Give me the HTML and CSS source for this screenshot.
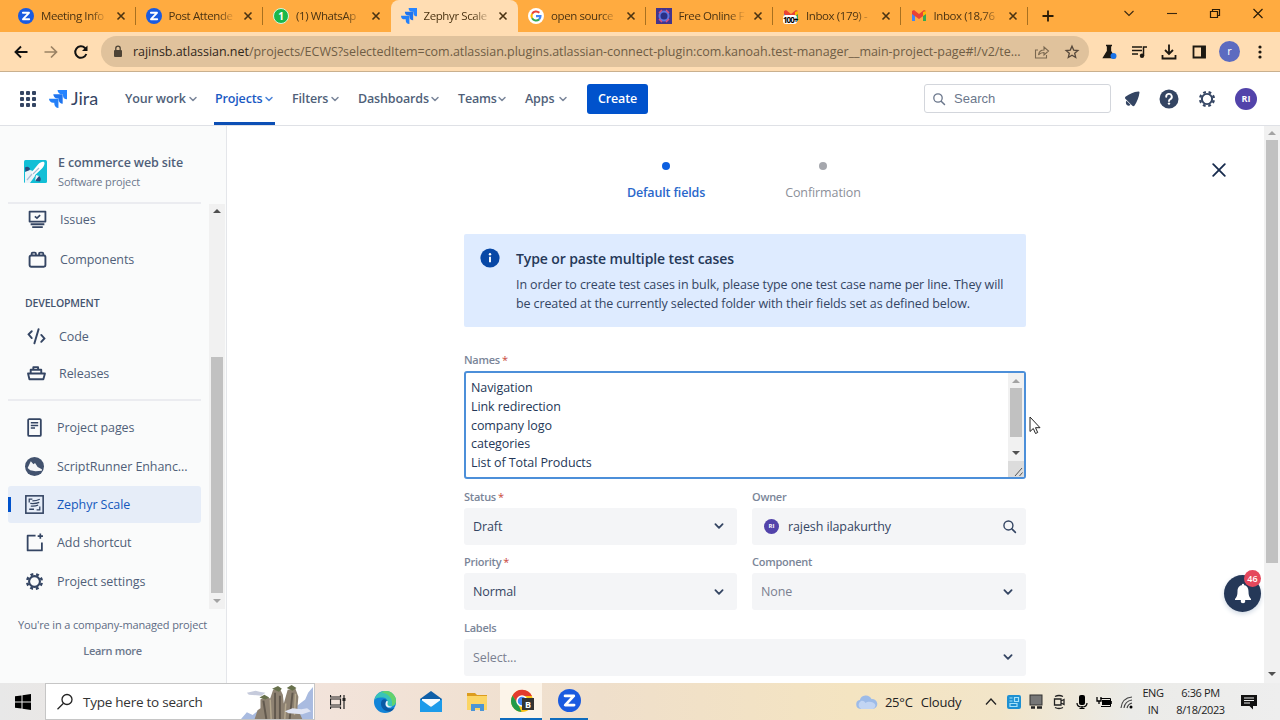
FILE: index.html
```
<!DOCTYPE html>
<html lang="en">
    <head>
        <meta charset="utf-8">
        <title>Zephyr Scale</title>
        <meta name="viewport" content="width=device-width, initial-scale=1" />
        <link rel="stylesheet" href="styles.css">
    </head>
    <body>
        <!-- shared icons -->
        <svg class="sprite">
            <symbol id="i-jira" viewBox="0 0 20 20">
                <path fill="#2684ff" d="M9.5 0H20v10.400a4.600 4.600 0 0 1-4.500-4.600V4.600h-1.400A4.600 4.600 0 0 1 9.500 0z"/>
                <path fill="#1f74ee" d="M4.800 4.800h10.400v10.400a4.600 4.600 0 0 1-4.600-4.600V9.400H9.400a4.600 4.600 0 0 1-4.600-4.600z"/>
                <path fill="#2480f8" d="M0 9.600h10.500V20a4.600 4.600 0 0 1-4.600-4.600v-1.200H4.600A4.600 4.600 0 0 1 0 9.600z"/>
            </symbol>
            <symbol id="i-zoom" viewBox="0 0 16 16">
                <circle cx="8" cy="8" r="8" fill="#1a5be0"/>
                <path d="M4.900 4.800h6.100L5 11.200h6.200" fill="none" stroke="#fff" stroke-width="1.900" stroke-linejoin="round" stroke-linecap="round"/>
            </symbol>
            <symbol id="i-x" viewBox="0 0 10 10">
                <path d="M1.500 1.500l7 7M8.500 1.500l-7 7" fill="none" stroke="currentColor" stroke-width="1.600"/>
            </symbol>
            <symbol id="i-chev" viewBox="0 0 10 10">
                <path d="M2 3.500l3 3 3-3" fill="none" stroke="currentColor" stroke-width="1.500" stroke-linecap="round" stroke-linejoin="round"/>
            </symbol>
            <symbol id="i-search" viewBox="0 0 14 14">
                <circle cx="6" cy="6" r="4.200" fill="none" stroke="currentColor" stroke-width="1.300"/>
                <path d="M9.200 9.200l3.300 3.300" stroke="currentColor" stroke-width="1.500" stroke-linecap="round"/>
            </symbol>
            <symbol id="i-gear" viewBox="0 0 20 20">
                <g fill="none" stroke="currentColor">
                    <circle cx="10" cy="10" r="5.700" stroke-width="2.200"/>
                    <circle cx="10" cy="10" r="7.700" stroke-width="2.600" stroke-dasharray="3.050 2.998" stroke-dashoffset="-1.500"/>
                </g>
            </symbol>
            <symbol id="i-mail" viewBox="0 0 16 16">
                <path d="M1 13V4h3v9z" fill="#4285f4"/>
                <path d="M12 13V4h3v9z" fill="#34a853"/>
                <path d="M1 3l2-1 5 4 5-4 2 1v3L8 11 1 6z" fill="#ea4335"/>
                <path d="M12 4l3-1v3l-3 2z" fill="#fbbc04"/>
            </symbol>
        </svg>

        <div class="tabs">
            <div class="tab">
                <svg class="tab__icon"><use href="#i-zoom"/></svg>
                <span class="tab__title">Meeting Info</span>
                <svg class="tab__close"><use href="#i-x"/></svg>
            </div>
            <div class="tab">
                <svg class="tab__icon"><use href="#i-zoom"/></svg>
                <span class="tab__title">Post Attende</span>
                <svg class="tab__close"><use href="#i-x"/></svg>
            </div>
            <div class="tab tab--before">
                <span class="tab__icon whatsapp">1</span>
                <span class="tab__title">(1) WhatsAp</span>
                <svg class="tab__close"><use href="#i-x"/></svg>
            </div>
            <div class="tab tab--active">
                <svg class="tab__icon"><use href="#i-jira"/></svg>
                <span class="tab__title">Zephyr Scale</span>
                <svg class="tab__close"><use href="#i-x"/></svg>
            </div>
            <div class="tab">
                <svg class="tab__icon" viewBox="0 0 16 16">
                    <circle cx="8" cy="8" r="8" fill="#fff"/>
                    <g fill="none" stroke-width="2.100">
                        <path d="M4.100 5.700A4.600 4.600 0 0 1 11.300 4.800" stroke="#ea4335"/>
                        <path d="M4.100 5.700a4.600 4.600 0 0 0 0 4.600" stroke="#fbbc05"/>
                        <path d="M4.100 10.300a4.600 4.600 0 0 0 7 1.100" stroke="#34a853"/>
                        <path d="M8 8.100h4.500a4.600 4.600 0 0 1-1.400 3.300" stroke="#4285f4"/>
                    </g>
                </svg>
                <span class="tab__title">open source</span>
                <svg class="tab__close"><use href="#i-x"/></svg>
            </div>
            <div class="tab">
                <svg class="tab__icon" viewBox="0 0 16 16">
                    <rect width="16" height="16" fill="#43348c"/>
                    <circle cx="8" cy="8" r="4.500" fill="#2a2f86" stroke="#5d74e0" stroke-width="2"/>
                    <path d="M3 5l3-3M13 11l-3 3M13 5l-3-3M3 11l3 3" stroke="#d8527a" stroke-width="1.500"/>
                </svg>
                <span class="tab__title">Free Online F</span>
                <svg class="tab__close"><use href="#i-x"/></svg>
            </div>
            <div class="tab">
                <span class="tab__icon unread"><svg width="16" height="16"><use href="#i-mail"/></svg><b class="unread__count">100+</b></span>
                <span class="tab__title">Inbox (179) -</span>
                <svg class="tab__close"><use href="#i-x"/></svg>
            </div>
            <div class="tab">
                <svg class="tab__icon"><use href="#i-mail"/></svg>
                <span class="tab__title">Inbox (18,76</span>
                <svg class="tab__close"><use href="#i-x"/></svg>
            </div>
            <svg class="tabs__new" viewBox="0 0 12 12"><path d="M6 .5v11M.5 6h11" stroke="#2b1c06" stroke-width="1.800"/></svg>
            <div class="window">
                <svg width="12" height="12"><path d="M1.500 3l4.500 4.500 4.500-4.500" fill="none" stroke="#3a2811" stroke-width="1.100"/></svg>
                <svg width="12" height="12"><path d="M1 5.500h10" stroke="#3a2811" stroke-width="1.100"/></svg>
                <svg width="12" height="12"><path d="M1.500 3.500h7v6h-7zM3.500 3.500v-2h7v6h-2" fill="none" stroke="#2b1c06" stroke-width="1.200"/></svg>
                <svg width="12" height="12"><path d="M1.500 1l9 9M10.500 1l-9 9" stroke="#2b1c06" stroke-width="1.200"/></svg>
            </div>
        </div>

        <div class="toolbar">
            <div class="toolbar__nav">
                <svg width="16" height="16"><path d="M14.500 8H2.500M8 2.500L2.500 8 8 13.500" fill="none" stroke="#111" stroke-width="1.900"/></svg>
                <svg width="16" height="16"><path d="M1.500 8h12M8 2.500L13.500 8 8 13.500" fill="none" stroke="#9b8264" stroke-width="1.700"/></svg>
                <svg width="16" height="16"><path d="M13.300 10A5.700 5.700 0 1 1 12 4l1 1" fill="none" stroke="#111" stroke-width="2"/><path d="M14.500 1.500v5.500H9z" fill="#111"/></svg>
            </div>
            <div class="address">
                <svg class="address__lock" viewBox="0 0 10 13"><rect x="1" y="5" width="8" height="7" rx="1" fill="#4d4335"/><path d="M2.800 5V3.300a2.200 2.200 0 0 1 4.400 0V5" fill="none" stroke="#4d4335" stroke-width="1.300"/></svg>
                <span class="address__url"><b>rajinsb.atlassian.net</b>/projects/ECWS?selectedItem=com.atlassian.plugins.atlassian-connect-plugin:com.kanoah.test-manager__main-project-page#!/v2/te...</span>
                <svg width="16" height="16" class="address__share"><path d="M4 6H1.500v8h11v-3M4.500 11C5 7.500 7 6 10 6V3l4.500 4-4.500 4V8.500C8 8.500 6 9 4.500 11z" fill="none" stroke="#7a6850" stroke-width="1.100"/></svg>
                <svg width="16" height="16"><path d="M8 2.200l1.700 3.900 4.200.400-3.200 2.800 1 4.200L8 11.300l-3.700 2.200 1-4.200L2.100 6.500l4.200-.400z" fill="none" stroke="#55473a" stroke-width="1.300"/></svg>
            </div>
            <div class="toolbar__tools">
                <svg width="18" height="18"><path d="M6 2.500h6M7.500 3h3v5l4 6.500H3.500L7.500 8z" fill="#1d1811" stroke="#1d1811" stroke-width="1.300"/><circle cx="13.500" cy="13" r="3" fill="#1a73e8"/></svg>
                <svg width="18" height="18"><path d="M2 4h10M2 7.500h10M2 11h6M13.500 13V4h3.500" fill="none" stroke="#1d1811" stroke-width="1.500"/><circle cx="12" cy="12.800" r="2.200" fill="#1d1811"/></svg>
                <svg width="18" height="18"><path d="M9 1.500v9M5 7l4 4 4-4M2.500 12v3.500h13V12" fill="none" stroke="#1d1811" stroke-width="1.800"/></svg>
                <svg width="18" height="18"><path d="M3.500 3.500h11.500v11H3.500z" fill="none" stroke="#1d1811" stroke-width="1.800"/><path d="M11 3h4.500v12H11z" fill="#1d1811"/></svg>
                <span class="profile">r</span>
                <svg width="18" height="18"><g fill="#1d1811"><circle cx="9" cy="4" r="1.600"/><circle cx="9" cy="9" r="1.600"/><circle cx="9" cy="14" r="1.600"/></g></svg>
            </div>
        </div>

        <div class="header">
            <svg class="header__apps" viewBox="0 0 16 16" fill="#344563">
                <rect width="4" height="4" rx="1"/><rect x="6" width="4" height="4" rx="1"/><rect x="12" width="4" height="4" rx="1"/>
                <rect y="6" width="4" height="4" rx="1"/><rect x="6" y="6" width="4" height="4" rx="1"/><rect x="12" y="6" width="4" height="4" rx="1"/>
                <rect y="12" width="4" height="4" rx="1"/><rect x="6" y="12" width="4" height="4" rx="1"/><rect x="12" y="12" width="4" height="4" rx="1"/>
            </svg>
            <svg class="header__logo"><use href="#i-jira"/></svg>
            <span class="header__brand">Jira</span>
            <div class="nav">
                <a class="nav__item nav__item--work">Your work<svg><use href="#i-chev"/></svg></a>
                <a class="nav__item nav__item--projects">Projects<svg><use href="#i-chev"/></svg></a>
                <a class="nav__item nav__item--filters">Filters<svg><use href="#i-chev"/></svg></a>
                <a class="nav__item nav__item--dashboards">Dashboards<svg><use href="#i-chev"/></svg></a>
                <a class="nav__item nav__item--teams">Teams<svg><use href="#i-chev"/></svg></a>
                <a class="nav__item nav__item--apps">Apps<svg><use href="#i-chev"/></svg></a>
            </div>
            <button class="create">Create</button>
            <div class="header__right">
                <div class="search"><svg width="14" height="14"><use href="#i-search"/></svg>Search</div>
                <svg width="22" height="22" fill="#344563"><path d="M17.500 3.500C12.500 4 8.500 5.700 4.800 8.600c-1 .8-1 1.700-.2 2.500l6.500 6.500c.9.800 1.800.7 2.500-.2 2.500-3.800 4.300-8 4.900-12.900 0-.7-.3-1.100-1-1z"/><path d="M5.500 12.800l4 4c-1 1.300-2.600 1.300-3.600.3s-1.500-3-.4-4.300z"/></svg>
                <svg width="22" height="22"><circle cx="11" cy="11" r="9.500" fill="#344563"/><path d="M8.200 8.700a2.800 2.800 0 1 1 4.200 2.400c-1 .600-1.400 1-1.400 2" fill="none" stroke="#fff" stroke-width="1.900" stroke-linecap="round"/><circle cx="11" cy="15.600" r="1.200" fill="#fff"/></svg>
                <svg width="22" height="22" class="header__gear"><use href="#i-gear" x="2" y="2" width="18" height="18"/></svg>
                <span class="avatar">RI</span>
            </div>
        </div>

        <div class="page">
            <div class="sidebar">
                <div class="project">
                    <svg class="project__logo" viewBox="0 0 23 23">
                        <rect width="23" height="23" rx="1.500" fill="#12bfd6"/>
                        <path d="M1 7.500q3-2 5 1l-1 2.500-3.500 1zM16 21.500q2-3-1-5.500l-2.500 1-1 4z" fill="#2b4a7c"/>
                        <path d="M1 22l5-8 4-1 1 3-5 7H1zM1 12l5-2 3 1-3 6-5 5zM11 21l1-6 3 1z" fill="#eef3f8"/>
                        <path d="M7 13L14 4.500c2-2.500 5-3.300 6-2.500s.500 4-2 6.500L10 16z" fill="#fff"/>
                        <path d="M9 14l6-6M3 20l5-6" stroke="#a9bdd4" stroke-width="1.200"/>
                    </svg>
                    <div>
                        <div class="project__name">E commerce web site</div>
                        <div class="project__type">Software project</div>
                    </div>
                </div>
                <div class="sidebar__body">
                    <div class="menu">
                        <a class="menu__item menu__item--first">
                            <svg viewBox="0 0 18 18"><path d="M1.500 1.500h15v9.500h-15zM2.500 13.500h13M4 16.200h10" fill="none" stroke="#344563" stroke-width="1.700" stroke-linejoin="round"/><path d="M6.500 6l2 1.700L11.500 4.800" fill="none" stroke="#344563" stroke-width="1.600"/></svg>
                            <span>Issues</span>
                        </a>
                        <a class="menu__item menu__item--space">
                            <svg viewBox="0 0 18 18"><rect x="1.500" y="5.200" width="15" height="10.600" rx="1.500" fill="none" stroke="#344563" stroke-width="1.800"/><path d="M3.500 5V3.500q0-1 1-1h2q1 0 1 1V5M10.500 5V3.500q0-1 1-1h2q1 0 1 1V5" fill="none" stroke="#344563" stroke-width="1.700"/></svg>
                            <span>Components</span>
                        </a>
                        <div class="menu__label">DEVELOPMENT</div>
                        <a class="menu__item menu__item--dev">
                            <svg viewBox="0 0 18 18"><path d="M4.500 4L1.500 7l3 3.500M13.500 7.500l3 3.300-3 3.200M11 2L7 15.500" fill="none" stroke="#344563" stroke-width="1.800" stroke-linecap="round"/></svg>
                            <span>Code</span>
                        </a>
                        <a class="menu__item menu__item--dev">
                            <svg viewBox="0 0 18 18"><path d="M1 9h16l-1.500 5.500H2.300zM3.500 8.500V5.500h10v3M6 5.500V3h4.500v2.500" fill="none" stroke="#344563" stroke-width="1.800" stroke-linejoin="round"/></svg>
                            <span>Releases</span>
                        </a>
                        <div class="menu__line"></div>
                        <a class="menu__item">
                            <svg viewBox="0 0 18 18"><rect x="3" y="1" width="12" height="16" rx="1" fill="none" stroke="#344563" stroke-width="1.700"/><path d="M5.500 4.500h7M5.500 7h7M5.500 9.500h4" stroke="#344563" stroke-width="1.400"/></svg>
                            <span>Project pages</span>
                        </a>
                        <a class="menu__item menu__item--runner">
                            <svg viewBox="0 0 18 18"><circle cx="9" cy="9" r="9" fill="#42526e"/><path d="M2.500 10.500l3-6.500 2.500 2.800 1.500-1L12 9.500l4 2v1.500L10 13.500 5 12.500z" fill="#f4f5f7"/></svg>
                            <span>ScriptRunner Enhanc...</span>
                        </a>
                        <a class="menu__item menu__item--selected">
                            <svg viewBox="0 0 18 18"><rect x=".8" y=".8" width="16.400" height="16.400" fill="none" stroke="#344563" stroke-width="1.500"/><path d="M4 7V4h3M14 11v3h-3M7 5.500q4 0 7-1.500M5 8q5 .5 8.500-1M5.500 10.500q4 .5 7-1M4 13.500h4.500" fill="none" stroke="#344563" stroke-width="1.200"/></svg>
                            <span>Zephyr Scale</span>
                        </a>
                        <a class="menu__item menu__item--add">
                            <svg viewBox="0 0 18 18"><path d="M10 2.500H2.500v14h13.500V9" fill="none" stroke="#344563" stroke-width="1.700" stroke-linejoin="round"/><path d="M14.500.5v5M12 3h5" stroke="#344563" stroke-width="1.600"/></svg>
                            <span>Add shortcut</span>
                        </a>
                        <a class="menu__item menu__item--settings">
                            <svg viewBox="0 0 20 20"><use href="#i-gear"/></svg>
                            <span>Project settings</span>
                        </a>
                    </div>
                    <div class="scroll scroll--sidebar">
                        <i class="scroll__up"></i>
                        <i class="scroll__thumb"></i>
                        <i class="scroll__down"></i>
                    </div>
                </div>
                <div class="sidebar__footer">
                    <p class="sidebar__note">You're in a company-managed project</p>
                    <p class="sidebar__more">Learn more</p>
                </div>
            </div>

            <div class="main">
                <div class="content">
                    <div class="steps">
                        <div class="step step--active">Default fields</div>
                        <div class="step">Confirmation</div>
                    </div>

                    <div class="info">
                        <svg class="info__icon" viewBox="0 0 20 20"><circle cx="10" cy="10" r="9.600" fill="#0747a6"/><circle cx="10" cy="6.200" r="1.200" fill="#fff"/><path d="M10 8.800v5.400" stroke="#fff" stroke-width="1.900"/></svg>
                        <div>
                            <h1 class="info__title">Type or paste multiple test cases</h1>
                            <p class="info__text">In order to create test cases in bulk, please type one test case name per line. They will<br>be created at the currently selected folder with their fields set as defined below.</p>
                        </div>
                    </div>

                    <label class="label label--names">Names<em>*</em></label>
                    <div class="names">
                        <div class="names__text">Navigation<br>Link redirection<br>company logo<br>categories<br>List of Total Products</div>
                        <div class="names__side">
                            <div class="scroll scroll--names">
                                <i class="scroll__up"></i>
                                <i class="scroll__thumb"></i>
                                <i class="scroll__down"></i>
                            </div>
                            <svg width="16" height="16" class="names__grip"><path d="M7 15l7-8M11.500 15l3-3.500" stroke="#555" stroke-width="1"/></svg>
                        </div>
                    </div>

                    <div class="fields">
                        <div class="field">
                            <label class="label">Status<em class="red">*</em></label>
                            <div class="select">Draft<svg><use href="#i-chev"/></svg></div>
                        </div>
                        <div class="field">
                            <label class="label">Owner</label>
                            <div class="select select--owner"><span class="avatar avatar--small">RI</span>rajesh ilapakurthy<svg class="select__search"><use href="#i-search"/></svg></div>
                        </div>
                        <div class="field">
                            <label class="label">Priority<em class="red">*</em></label>
                            <div class="select">Normal<svg><use href="#i-chev"/></svg></div>
                        </div>
                        <div class="field">
                            <label class="label">Component</label>
                            <div class="select select--empty">None<svg><use href="#i-chev"/></svg></div>
                        </div>
                        <div class="field field--wide">
                            <label class="label">Labels</label>
                            <div class="select select--empty">Select...<svg><use href="#i-chev"/></svg></div>
                        </div>
                    </div>
                </div>
                <svg class="main__close" viewBox="0 0 14 14"><path d="M1.200 1.200l11.600 11.600M12.800 1.200L1.200 12.800" stroke="#172b4d" stroke-width="1.800" stroke-linecap="round"/></svg>
            </div>

            <div class="scroll scroll--page">
                <i class="scroll__up"></i>
                <i class="scroll__thumb"></i>
                <i class="scroll__down"></i>
            </div>

            <div class="bell">
                <svg width="20" height="22" fill="#fff"><path d="M10 2c-4 0-5.500 3-5.500 6.500 0 4-.8 5.500-2.500 7.500v1h16v-1c-1.700-2-2.500-3.500-2.500-7.500C15.500 5 14 2 10 2z"/><circle cx="10" cy="18" r="2.300"/><circle cx="10" cy="2" r="1.200"/></svg>
                <span class="bell__count">46</span>
            </div>
            <svg class="cursor" viewBox="0 0 12 19"><path d="M1 1v14.500l3.300-3 2.200 5 2.200-1-2.200-4.800H11z" fill="#fff" stroke="#222" stroke-width="1"/></svg>
        </div>

        <div class="taskbar">
            <div class="start">
                <svg width="16" height="16"><path d="M0 2.300l6.500-.9v6.100H0zM7.500 1.200L16 0v7.500H7.500zM0 8.500h6.500v6.100L0 13.700zM7.500 8.500H16V16l-8.500-1.200z"/></svg>
            </div>
            <div class="taskbar__search">
                <svg width="18" height="18"><circle cx="11" cy="6.500" r="5" fill="none" stroke="#222" stroke-width="1.300"/><path d="M7.500 10.200L1.500 16.200" stroke="#222" stroke-width="1.300"/></svg>
                <span>Type here to search</span>
                <svg class="doodle" viewBox="0 0 74 36">
                    <path d="M0 36l6-7 6 3 7-6 4 10zM48 36V24l10-2 8-6 3-7 5-6v33z" fill="#a9bbe0"/>
                    <path d="M6 9l9-2 4 1 6 1-4 3-13-1z" fill="#c6cbdc"/>
                    <path d="M14 36l3-9 3-2v-9l5-3 5 2 3-9 7-1 3 6 1 9 4-14 8-1 3 8-1 12 5 11z" fill="#8e8272"/>
                    <path d="M23 17l3 19M35 9v27M40 12v24M53 9l-3 27" stroke="#62594e" stroke-width="2"/>
                    <path d="M30 16l1 20M46 20l-1 16M56 10l-1 22" stroke="#b5a88e" stroke-width="1.500"/>
                    <path d="M32 5l6-3 4 3-3 3zM47 4l5-3 5 3-4 3zM19 14l5-3 5 3-4 2z" fill="#68714c"/>
                    <path d="M45 28l8-3 9 1 6-1 4 3-9 3-14-1z" fill="#dfe4f3"/>
                </svg>
            </div>
            <div class="apps">
                <div class="apps__item"><svg width="16" height="16"><path d="M.5 1v2h10V1M.5 15v-2h10v2M.5 5h10v6H.5zM14 1v14" fill="none" stroke="#222" stroke-width="1.200"/><path d="M12.500 4h3v3h-3z" fill="#222"/></svg></div>
                <div class="apps__item apps__item--edge">
                    <svg width="24" height="24">
                        <circle cx="12" cy="12" r="11" fill="#1284d8"/>
                        <path d="M1.500 10C3 3.500 7.500 1 12.500 1 19 1 23 6 23 11c0 4-3 5.500-6 5.500-2 0-4-.8-3-2.500 2-3.500-1-6.500-4-6.500-4 0-6.500 0-8.500 2.500z" fill="#39c4b8"/>
                        <path d="M12.500 1C19 1 23 6 23 11c0 3-2 4.500-4 5 1-7-2.500-12-11-14.100z" fill="#63d26c"/>
                        <path d="M8.500 11c-2 5 2 11 8.500 10.500 2-.5 3.500-2 4.500-3.500-5 2-9-.5-9-4 0-1.500 1-2 1-3.500-1-2-4-1.500-5 .5z" fill="#0c59a4"/>
                        <path d="M14 11c1.500 0 .5 2 .5 3 0 2 2.500 2.800 5 2.200-2 2.500-7 1.500-7-2 0-1.500.5-3 1.500-3.200z" fill="#eef4f6"/>
                    </svg>
                </div>
                <div class="apps__item">
                    <svg width="24" height="24"><path d="M1 9L12 1l11 8v3H1z" fill="#0f5fa8"/><path d="M3 9h18v7H3z" fill="#f5fbff"/><path d="M1 9l11 8 11-8v13H1z" fill="#1c9bea"/><path d="M3 9h18l-9 7z" fill="#f5fbff"/></svg>
                </div>
                <div class="apps__item">
                    <svg width="22" height="22"><path d="M1 2h8l2 2h10v5H1z" fill="#dc9c1e"/><path d="M1 5h20v14H1z" fill="#fbd565"/><path d="M5 13h13v7h-4v-3H9v3H5z" fill="#4a95d6"/></svg>
                </div>
                <div class="apps__item apps__item--chrome">
                    <svg width="26" height="24">
                        <circle cx="12" cy="12" r="11" fill="#fbc116"/>
                        <path d="M2.500 6.500A11 11 0 0 1 22 7H12L7 14z" fill="#e33b2e"/>
                        <path d="M2.500 6.500L8.500 16l3 7A11 11 0 0 1 2.500 6.500z" fill="#229a4b"/>
                        <circle cx="12" cy="12" r="5" fill="#4285f4" stroke="#fff" stroke-width="1.500"/>
                        <rect x="12" y="9" width="12" height="12" fill="#333"/>
                        <text class="apps__badge" x="18" y="18.500">B</text>
                    </svg>
                </div>
                <div class="apps__item apps__item--zoom"><svg width="23" height="23"><use href="#i-zoom"/></svg></div>
            </div>
            <div class="weather">
                <svg width="23" height="16"><path d="M5.500 15a4.500 4.500 0 0 1-.7-8.900A6.300 6.300 0 0 1 16.500 5 5 5 0 0 1 18 15z" fill="#9dbbe8"/><path d="M6 15a4.500 4.500 0 0 1 0-8c2-.5 3.500.5 4.500 2 2-2 8-2 10 2-.5 2.500-1.500 4-3 4z" fill="#c2d5f3"/></svg>
                <span>25°C</span><span>Cloudy</span>
            </div>
            <div class="tray">
                <svg width="16" height="16"><path d="M3 10.500L8 5l5 5.500" fill="none" stroke="#222" stroke-width="1.300"/></svg>
                <svg width="16" height="16"><rect x="1" y="1" width="14" height="14" rx="2" fill="#1d90d2"/><path d="M3.500 4h3M8.500 3.500h4v4h-4zM3.500 7h3M4 9.500h7v3H4z" fill="none" stroke="#a6e2fa" stroke-width="1.200"/></svg>
                <svg width="16" height="16"><rect x="2" y="1" width="12" height="10" fill="#777" stroke="#333"/><path d="M3 13.500h4M9 13.500h5" stroke="#222" stroke-width="2.500"/></svg>
                <svg width="16" height="16"><path d="M4 2.500q4-2 8 0M4 13.500q4 2 8 0M3.500 5h6.500v6H3.500zM10 7l3-1.500v5L10 9" fill="none" stroke="#222" stroke-width="1.300"/></svg>
                <svg width="16" height="16"><rect x="5" y="1" width="6" height="10" rx="2"/><path d="M3 9q0 4 5 4t5-4M8 12v3M5.500 14.500h5" fill="none" stroke="#000" stroke-width="1.200"/></svg>
                <svg width="16" height="16"><path d="M6 6h8v5H6z"/><path d="M4.500 4.500h10v8H5M15.300 7v3" fill="none" stroke="#000" stroke-width="1"/><path d="M1 3v4h4V3M3 7v3" fill="none" stroke="#000" stroke-width="1.300"/></svg>
                <svg width="16" height="16"><path d="M2 14Q3 4 13 3M5 14q1-7 8-8M8 14q1-4 5-5" fill="none" stroke="#444" stroke-width="1.200"/><circle cx="12" cy="13" r="1.500"/></svg>
            </div>
            <div class="clock clock--lang">ENG<br>IN</div>
            <div class="clock">6:36 PM<br>8/18/2023</div>
            <svg class="notice" viewBox="0 0 16 16"><path d="M0 1h16v11h-4v3.500L8.500 12H0z" fill="#111"/><path d="M3 4h10M3 6.500h10M3 9h6" stroke="#eee" stroke-width="1.100"/></svg>
        </div>
    </body>
</html>
```

FILE: styles.css
```
* {
    padding: 0px;
    margin: 0px;
    box-sizing: border-box;
}

html, body{
    width: 1280px;
    height: 720px;
    overflow: hidden;
    background-color: white;
    font-family: "Open Sans", "Noto Sans", sans-serif;
    color: #172b4d;
}

body{
    display: flex;
    flex-direction: column;
}

svg{
    display: block;
    flex: none;
}

.sprite{
    position: absolute;
    width: 0;
    height: 0;
}

/* browser tabs */
.tabs{
    display: flex;
    height: 32px;
    flex: none;
    padding-left: 8px;
    background: #ffab40;
}

.tab{
    display: flex;
    align-items: center;
    width: 127.5px;
    padding-left: 10px;
    position: relative;
}

.tab::after{
    content: "";
    position: absolute;
    right: 0;
    top: 7px;
    height: 18px;
    width: 1px;
    background: #a8701f;
}

.tab--before::after, .tab--active::after{
    display: none;
}

.tab--active{
    background: #ffddb3;
    border-radius: 8px 8px 0 0;
}

.tab__icon{
    width: 16px;
    height: 16px;
    flex: none;
}

.tab__title{
    width: 66px;
    margin: -1px 0 0 7px;
    white-space: nowrap;
    font-size: 11.5px;
    letter-spacing: -0.4px;
    color: #4b3312;
    -webkit-mask-image: linear-gradient(90deg, #000 75%, rgba(0, 0, 0, .15) 97%);
    mask-image: linear-gradient(90deg, #000 75%, rgba(0, 0, 0, .15) 97%);
}

.tab__close{
    width: 10px;
    height: 10px;
    margin-left: 8.500px;
    color: #4b3312;
}

.whatsapp{
    background: #19b84a;
    border: 1px solid #d9f5e0;
    border-radius: 50%;
    color: white;
    font-size: 10px;
    font-weight: bold;
    line-height: 14px;
    text-align: center;
}

.unread{
    position: relative;
}

.unread__count{
    position: absolute;
    left: 0;
    top: 7px;
    background: white;
    border-radius: 3px;
    color: black;
    font-size: 8px;
    line-height: 9px;
    letter-spacing: -1px;
}

.tabs__new{
    width: 12px;
    height: 12px;
    margin: 10px 0 0 14px;
}

.window{
    display: flex;
    gap: 31px;
    margin-left: auto;
    padding: 8px 16px 0 0;
}

/* address bar */
.toolbar{
    display: flex;
    align-items: center;
    height: 40px;
    flex: none;
    background: #ffddb3;
    border-bottom: 1px solid #c9b08e;
}

.toolbar__nav{
    display: flex;
    gap: 14px;
    padding-left: 13px;
    width: 101px;
}

.address{
    display: flex;
    align-items: center;
    width: 988px;
    height: 31px;
    padding: 0 9px 0 12px;
    border-radius: 16px;
    background: #e0c29c;
}

.address__lock{
    width: 10px;
    height: 13px;
}

.address__url{
    flex: 1;
    margin-left: 10px;
    white-space: nowrap;
    font-size: 12.5px;
    letter-spacing: -0.03px;
    color: #6f5d45;
}

.address__url b{
    font-weight: normal;
    color: #30271b;
}

.address__share{
    margin-right: 14px;
}

.toolbar__tools{
    display: flex;
    align-items: center;
    gap: 12px;
    margin-left: 11px;
}

.profile{
    width: 21px;
    height: 21px;
    margin: 0 -1px 0 -1px;
    border-radius: 50%;
    background: #5c6bc0;
    color: white;
    font-size: 11px;
    line-height: 19px;
    text-align: center;
}

/* jira header */
.header{
    display: flex;
    align-items: center;
    height: 53px;
    flex: none;
    padding-left: 20px;
}

.header__apps{
    width: 16px;
    height: 16px;
}

.header__logo{
    width: 18px;
    height: 18px;
    margin-left: 13px;
}

.header__brand{
    width: 54px;
    margin: -2px 0 0 4px;
    font-family: Lato, sans-serif;
    font-size: 18px;
    color: #344563;
}

.nav{
    display: flex;
    gap: 19px;
    height: 53px;
}

.nav__item{
    display: flex;
    align-items: center;
    justify-content: space-between;
    position: relative;
    font-size: 12.5px;
    font-weight: 600;
    letter-spacing: -0.15px;
    white-space: nowrap;
    color: #505f79;
}

.nav__item svg{
    width: 10px;
    height: 10px;
    margin-right: -1px;
    color: #7a869a;
}

.nav__item--work{ width: 72px; }
.nav__item--projects{
    width: 58px;
    margin-left: -1px;
    color: #1a5ac4;
}
.nav__item--projects::after{
    content: "";
    position: absolute;
    left: -1px;
    right: -2px;
    bottom: 0;
    height: 3px;
    background: #0c4fb5;
}
.nav__item--projects svg{ color: #4c84d8; }
.nav__item--filters{ width: 47px; }
.nav__item--dashboards{ width: 81px; }
.nav__item--teams{ width: 48px; }
.nav__item--apps{ width: 42px; }

.create{
    width: 61px;
    height: 30px;
    margin-left: 20px;
    border: 0;
    border-radius: 3px;
    background: #0052cc;
    color: white;
    font-family: inherit;
    font-size: 12.5px;
    font-weight: 600;
    letter-spacing: -0.15px;
}

.header__right{
    display: flex;
    align-items: center;
    gap: 15.500px;
    margin-left: auto;
    padding-right: 23px;
}

.search{
    display: flex;
    align-items: center;
    gap: 8px;
    width: 187px;
    height: 29px;
    margin-right: -6px;
    padding-left: 7px;
    border: 1px solid #d3d6dc;
    border-radius: 3px;
    font-family: "Liberation Sans", sans-serif;
    font-size: 13px;
    color: #6b778c;
}

.header__gear{
    margin-right: 2px;
    color: #344563;
}

.avatar{
    width: 22px;
    height: 22px;
    flex: none;
    border-radius: 50%;
    background: #5243aa;
    color: white;
    font-size: 9px;
    font-weight: bold;
    line-height: 22px;
    text-align: center;
}

.avatar--small{
    width: 15px;
    height: 15px;
    font-size: 6px;
    line-height: 15px;
}

/* page */
.page{
    display: flex;
    height: 558px;
    flex: none;
    position: relative;
    border-top: 1px solid #dfe1e6;
}

.sidebar{
    width: 227px;
    height: 557px;
    flex: none;
    background: #fafbfb;
    border-right: 1px solid #e4e6ea;
}

.project{
    display: flex;
    gap: 11px;
    height: 78px;
    margin: 0 25px 0 8px;
    padding: 27px 0 0 16px;
    border-bottom: 2px solid #ebecf0;
}

.project__logo{
    width: 23px;
    height: 23px;
    margin-top: 7px;
}

.project__name{
    font-size: 12.5px;
    font-weight: 600;
    line-height: 19px;
    letter-spacing: -0.12px;
    white-space: nowrap;
    color: #505f79;
}

.project__type{
    font-size: 11px;
    line-height: 19px;
    letter-spacing: -0.15px;
    color: #6b778c;
}

.sidebar__body{
    display: flex;
    justify-content: space-between;
    height: 405px;
}

.menu{
    width: 193px;
    margin-left: 8px;
}

.menu__item{
    display: flex;
    align-items: center;
    height: 37px;
    margin-top: 1px;
    padding-left: 17px;
    border-radius: 3px;
    font-size: 12.5px;
    letter-spacing: -0.07px;
    white-space: nowrap;
    color: #505f79;
}

.menu__item svg{
    width: 19px;
    height: 19px;
    margin-right: 13px;
    color: #344563;
}

.menu__item--first{
    height: 30px;
    margin-top: 0;
    padding-left: 20px;
}

.menu__item--space{
    margin-top: 6.500px;
    padding-left: 20px;
}

.menu__label{
    margin-top: 15.500px;
    padding-left: 17px;
    font-size: 10.5px;
    font-weight: 600;
    line-height: 21px;
    letter-spacing: -0.15px;
    color: #44546f;
}

.menu__item--dev{
    padding-left: 19px;
}

.menu__label + .menu__item{
    margin-top: 3.500px;
}

.menu__item--dev + .menu__item--dev{
    margin-top: 0.500px;
}

.menu__line{
    height: 2px;
    margin: 7px 0 7px;
    background: #ebecf0;
}

.menu__item--runner{
    margin-top: 2px;
}

.menu__item--selected{
    position: relative;
    background: #e6edf8;
    color: #1558bc;
}

.menu__line + .menu__item{
    margin-top: 8px;
}

.menu__item--selected::before{
    content: "";
    position: absolute;
    left: 0;
    top: 11px;
    width: 3px;
    height: 15px;
    background: #0052cc;
}

.menu__item--add{
    margin-top: 0.500px;
}

.menu__item--settings{
    margin-top: 2px;
}

.sidebar__footer{
    padding-top: 8px;
    padding-right: 1px;
    text-align: center;
    font-size: 11px;
    line-height: 16px;
    color: #5e6c84;
}

.sidebar__note{
    letter-spacing: -0.15px;
}

.sidebar__more{
    margin-top: 10px;
    font-weight: 600;
    letter-spacing: -0.3px;
    color: #6b778c;
}

/* scrollbars */
.scroll{
    display: flex;
    flex-direction: column;
    align-items: center;
    width: 16px;
    flex: none;
    background: #f1f1f1;
}

.scroll__up, .scroll__down{
    border: 4px solid transparent;
}

.scroll__up{
    border-top: 0;
    border-bottom: 4px solid #505050;
}

.scroll__down{
    margin-top: auto;
    border-bottom: 0;
    border-top: 4px solid #505050;
}

.scroll__thumb{
    width: 12px;
    background: #c1c1c1;
}

.scroll--sidebar{
    padding: 5px 0 6px;
    margin-right: 1px;
}

.scroll--sidebar .scroll__thumb{
    height: 236px;
    margin-top: 144px;
}

.scroll--sidebar .scroll__down{
    border-top-color: #a3a3a3;
}

.scroll--page{
    height: 557px;
    padding: 5px 0 7px;
}

.scroll--page .scroll__up, .scroll--names .scroll__up{
    border-bottom-color: #a3a3a3;
}

.scroll--page .scroll__thumb{
    height: 423px;
    margin-top: 5px;
}

.scroll--names{
    height: 88px;
    padding: 6px 0 6px;
}

.scroll--names .scroll__thumb{
    height: 49px;
    margin-top: 5px;
}

/* form */
.main{
    display: flex;
    justify-content: space-between;
    width: 1037px;
    height: 557px;
    padding: 0 38px 0 237px;
}

.main__close{
    width: 14px;
    height: 14px;
    margin-top: 37px;
}

.content{
    width: 562px;
}

.steps{
    display: flex;
    justify-content: center;
    padding: 36px 1px 0 0;
    height: 108px;
}

.step{
    width: 157px;
    text-align: center;
    font-size: 12.5px;
    line-height: 18px;
    letter-spacing: -0.1px;
    color: #8c9099;
}

.step::before{
    content: "";
    display: block;
    width: 8px;
    height: 8px;
    margin: 0 auto 14px;
    border-radius: 50%;
    background: #a5a7ad;
}

.step--active{
    font-weight: 600;
    letter-spacing: -0.15px;
    color: #2a67cb;
}

.step--active::before{
    background: #0c5fe0;
}

.info{
    display: flex;
    gap: 16px;
    height: 93px;
    padding: 14px 0 0 16px;
    border-radius: 2px;
    background: #deebff;
}

.info__icon{
    width: 20px;
    height: 20px;
}

.info__title{
    font-size: 14px;
    font-weight: 600;
    line-height: 21px;
    letter-spacing: -0.1px;
    color: #253858;
}

.info__text{
    margin-top: 7px;
    font-size: 12.5px;
    line-height: 18.800px;
    letter-spacing: -0.115px;
    white-space: nowrap;
    color: #344563;
}

.label{
    display: block;
    height: 22px;
    padding-top: 3px;
    font-size: 11px;
    font-weight: 600;
    line-height: 16px;
    letter-spacing: -0.25px;
    color: #7a8598;
}

.label em{
    margin-left: 2px;
    font-style: normal;
    font-weight: normal;
}

.label .red, .label--names em{
    color: #c9473a;
}

.label--names{
    height: 44px;
    padding-top: 25px;
}

.names{
    display: flex;
    justify-content: space-between;
    height: 108px;
    border: 2px solid #4c8fd9;
    border-radius: 3px;
}

.names__text{
    padding: 6px 0 0 5px;
    font-size: 12.5px;
    line-height: 18.800px;
    letter-spacing: -0.08px;
    color: #253858;
}

.names__side{
    width: 16px;
}

.names__grip{
    background: #dcdcdc;
}

.fields{
    display: grid;
    grid-template-columns: 273px 274px;
    column-gap: 15px;
    row-gap: 6.600px;
    margin-top: 6.800px;
}

.field--wide{
    grid-column: 1 / 3;
}

.select{
    display: flex;
    align-items: center;
    height: 37px;
    padding: 0 12.500px 0 9px;
    border-radius: 3px;
    background: #f4f5f7;
    font-size: 12.5px;
    letter-spacing: -0.1px;
    color: #344563;
}

.select svg{
    width: 12px;
    height: 12px;
    margin-left: auto;
    color: #344563;
}

.select--empty{
    color: #7a8090;
}

.select--owner{
    padding-left: 12px;
    padding-right: 9px;
}

.select--owner .avatar{
    margin-right: 9px;
    letter-spacing: 0;
}

.select .select__search{
    width: 15px;
    height: 15px;
}

.bell{
    position: absolute;
    left: 1224px;
    top: 449px;
    width: 37px;
    height: 37px;
    padding: 8px 0 0 8.500px;
    border-radius: 50%;
    background: #253858;
    box-shadow: 0 2px 5px #cfd8e3;
}

.bell__count{
    position: absolute;
    right: 0px;
    top: -5px;
    width: 17px;
    height: 17px;
    border-radius: 50%;
    background: #e5485d;
    color: white;
    font-size: 9px;
    font-weight: 600;
    line-height: 17px;
    text-align: center;
}

.cursor{
    position: absolute;
    left: 1029px;
    top: 290px;
    width: 12px;
    height: 19px;
}

/* windows taskbar */
.taskbar{
    display: flex;
    align-items: center;
    height: 37px;
    flex: none;
    background: linear-gradient(90deg, #e8e8e8 0, #f2e3da 330px, #efdfcb 600px, #f4e4c1 850px, #f2e5c9 1000px, #ebebe8 1130px, #eeeeee 1280px);
    color: #222;
}

.start{
    width: 45px;
    padding-left: 15px;
}

.taskbar__search{
    display: flex;
    align-items: center;
    width: 270px;
    height: 37px;
    padding-left: 10px;
    border: 1px solid #c6c6c6;
    background: white;
    font-size: 13.5px;
    letter-spacing: -0.25px;
    color: #333;
}

.taskbar__search span{
    margin-left: 9px;
    white-space: nowrap;
}

.doodle{
    width: 74px;
    height: 35px;
    margin-left: auto;
}

.apps{
    display: flex;
}

.apps__item{
    display: flex;
    align-items: center;
    justify-content: center;
    width: 46.300px;
    height: 37px;
}

.apps__item--edge{
    padding-left: 2px;
}

.apps__item--chrome{
    width: 42px;
    margin-right: 8px;
    padding-left: 4px;
    background: #fcf4e9;
    border-bottom: 2px solid #0f6cbd;
}

.apps__item--zoom{
    width: 38px;
    border-bottom: 2px solid #0f6cbd;
}

.apps__badge{
    fill: white;
    font-size: 9px;
    font-weight: bold;
    text-anchor: middle;
}

.weather{
    display: flex;
    align-items: center;
    gap: 8px;
    width: 128px;
    margin-left: auto;
    font-size: 13px;
    letter-spacing: -0.2px;
    white-space: nowrap;
}

.weather svg{
    margin-right: -1px;
}

.tray{
    display: flex;
    gap: 6.700px;
}

.clock{
    width: 57px;
    text-align: center;
    font-size: 11px;
    line-height: 16.500px;
    letter-spacing: -0.4px;
}

.clock--lang{
    width: 37px;
    padding-right: 1px;
}

.notice{
    width: 16px;
    height: 16px;
    margin: 0 23px 0 12px;
}
```
